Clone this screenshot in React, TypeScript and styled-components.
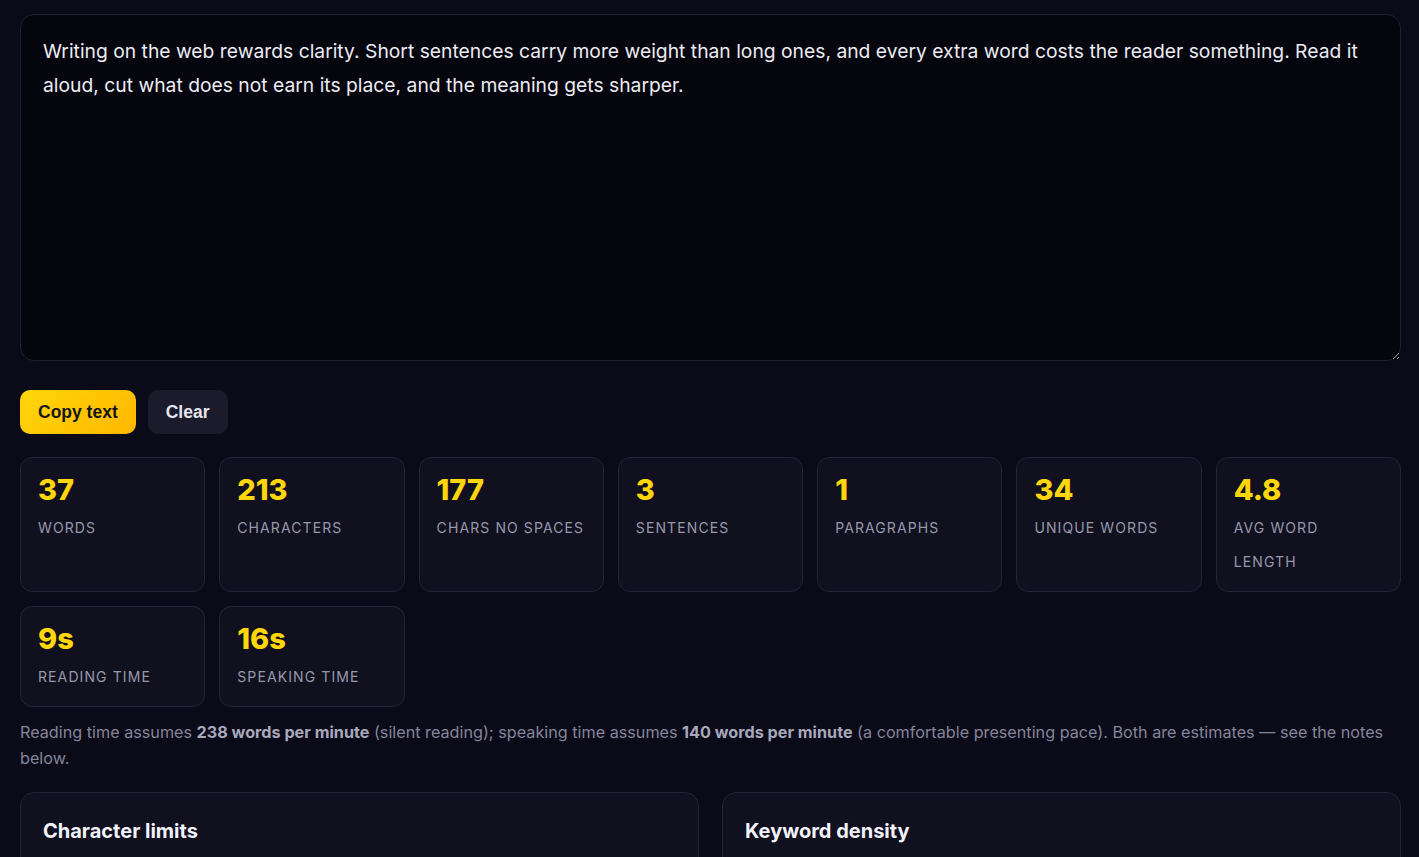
import React, { useState } from 'react'
import styled, { createGlobalStyle } from 'styled-components'

const GlobalStyle = createGlobalStyle`
  html, body {
    margin: 0;
    padding: 0;
    background: #0a0a18;
    color: #e6e6f0;
    font-family: Inter, 'Noto Sans', sans-serif;
  }
  * {
    box-sizing: border-box;
  }
`

const Page = styled.div`
  padding: 14px 18px 40px 20px;
  display: flex;
  flex-direction: column;
`

const Editor = styled.textarea`
  width: 100%;
  height: 347px;
  background: #05050e;
  border: 1px solid #1f1f33;
  border-radius: 14px;
  color: #ececf4;
  font-family: Inter, 'Noto Sans', sans-serif;
  font-size: 19.3px;
  line-height: 34px;
  padding: 19px 22px;
  resize: vertical;
  outline: none;
  display: block;
`

const Actions = styled.div`
  display: flex;
  gap: 12px;
  margin-top: 29px;
`

const Button = styled.button<{ $primary?: boolean }>`
  height: 44px;
  padding: 0 18px;
  border: none;
  border-radius: 10px;
  font-family: 'Liberation Sans', Arial, sans-serif;
  font-weight: 700;
  font-size: 17.5px;
  cursor: pointer;
  color: ${(p) => (p.$primary ? '#141414' : '#e6e6f0')};
  background: ${(p) =>
    p.$primary ? 'linear-gradient(135deg, #ffd60a 0%, #ffb700 100%)' : '#1b1b2b'};
`

const StatsGrid = styled.div`
  display: grid;
  grid-template-columns: repeat(7, 1fr);
  column-gap: 14px;
  row-gap: 14px;
  margin-top: 23px;
`

const StatCard = styled.div`
  background: #10101f;
  border: 1px solid #23233a;
  border-radius: 12px;
  padding: 15px 16px 12px 17px;
`

const StatValue = styled.div`
  color: #ffd60a;
  font-family: Inter, 'Noto Sans', sans-serif;
  font-weight: 800;
  font-size: 29px;
  line-height: 34px;
`

const StatLabel = styled.div`
  margin-top: 4px;
  color: #9898ac;
  font-size: 14px;
  line-height: 34px;
  letter-spacing: 1.1px;
  text-transform: uppercase;
`

const Note = styled.p`
  margin: 12px 0 0;
  color: #85859a;
  font-size: 16.2px;
  line-height: 26px;

  strong {
    color: #a8a8bc;
    font-weight: 700;
  }
`

const Panels = styled.div`
  display: grid;
  grid-template-columns: 1fr 1fr;
  gap: 23px;
  margin-top: 21px;
`

const Panel = styled.section`
  background: #10101f;
  border: 1px solid #23233a;
  border-radius: 14px;
  padding: 24px 22px;
  min-height: 160px;
`

const PanelTitle = styled.h2`
  margin: 0;
  font-size: 20px;
  line-height: 28px;
  font-weight: 700;
  color: #f2f2fa;
`

const initialText =
  'Writing on the web rewards clarity. Short sentences carry more weight than long ones, and every extra word costs the reader something. Read it aloud, cut what does not earn its place, and the meaning gets sharper.'

const stats = [
  { value: '37', label: 'Words' },
  { value: '213', label: 'Characters' },
  { value: '177', label: 'Chars no spaces' },
  { value: '3', label: 'Sentences' },
  { value: '1', label: 'Paragraphs' },
  { value: '34', label: 'Unique words' },
  { value: '4.8', label: 'Avg word length' },
  { value: '9s', label: 'Reading time' },
  { value: '16s', label: 'Speaking time' },
]

const App: React.FC = () => {
  const [text, setText] = useState(initialText)

  return (
    <>
      <GlobalStyle />
      <Page>
        <Editor value={text} onChange={(e) => setText(e.target.value)} spellCheck={false} />
        <Actions>
          <Button $primary onClick={() => navigator.clipboard?.writeText(text)}>
            Copy text
          </Button>
          <Button onClick={() => setText('')}>Clear</Button>
        </Actions>
        <StatsGrid>
          {stats.map((s) => (
            <StatCard key={s.label}>
              <StatValue>{s.value}</StatValue>
              <StatLabel>{s.label}</StatLabel>
            </StatCard>
          ))}
        </StatsGrid>
        <Note>
          Reading time assumes <strong>238 words per minute</strong> (silent reading); speaking
          time assumes <strong>140 words per minute</strong> (a comfortable presenting pace). Both
          are estimates — see the notes below.
        </Note>
        <Panels>
          <Panel>
            <PanelTitle>Character limits</PanelTitle>
          </Panel>
          <Panel>
            <PanelTitle>Keyword density</PanelTitle>
          </Panel>
        </Panels>
      </Page>
    </>
  )
}

export default App
